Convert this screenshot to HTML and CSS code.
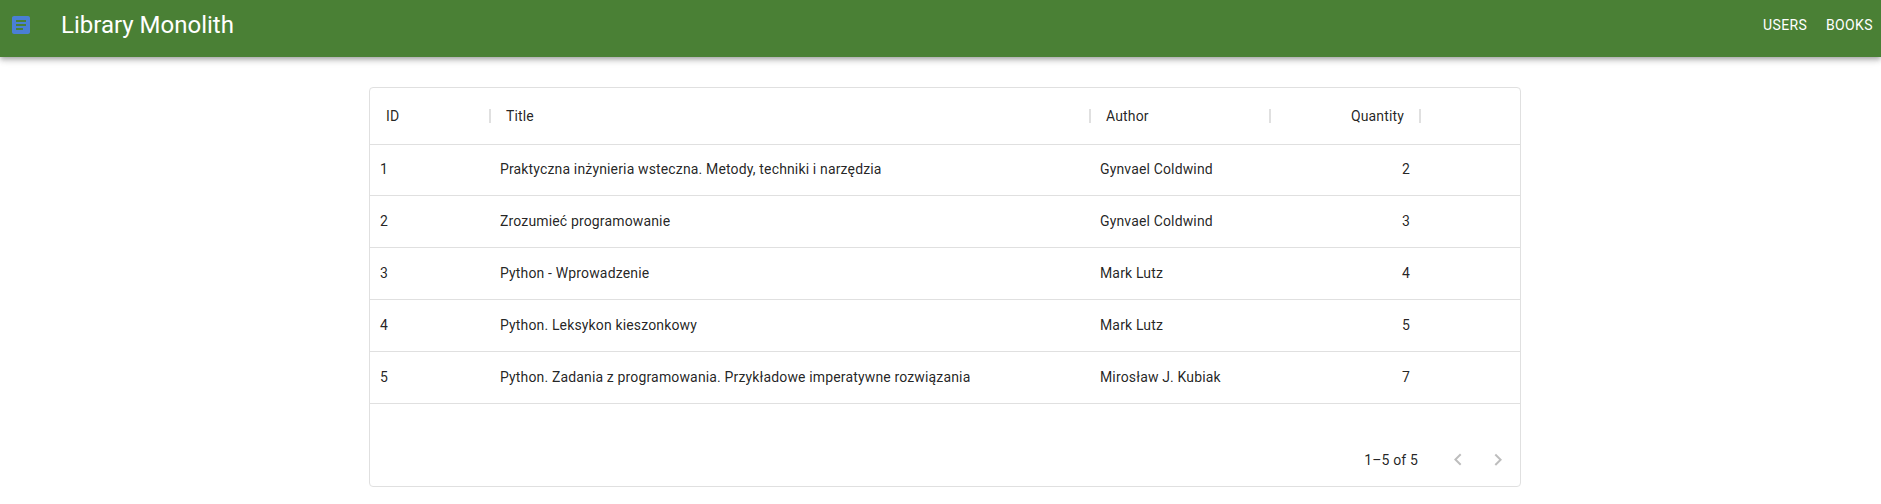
FILE: index.html
```html
<!DOCTYPE html>
<html lang="en">
<head>
<meta charset="utf-8">
<title>Library Monolith</title>
<link rel="stylesheet" href="styles.css">
</head>
<body>
<header class="app-bar">
  <svg class="logo" viewBox="0 0 24 24"><path d="M19 3H5c-1.1 0-2 .9-2 2v14c0 1.1.9 2 2 2h14c1.1 0 2-.9 2-2V5c0-1.1-.9-2-2-2zm-5 14H7v-2h7v2zm3-4H7v-2h10v2zm0-4H7V7h10v2z"/></svg>
  <h1 class="brand">Library Monolith</h1>
  <nav class="nav">
    <a class="nav-link">USERS</a>
    <a class="nav-link">BOOKS</a>
  </nav>
</header>
<main class="grid">
  <div class="grid-row grid-head">
    <div class="head-cell">ID</div>
    <div class="head-cell">Title</div>
    <div class="head-cell">Author</div>
    <div class="head-cell number">Quantity</div>
  </div>
  <div class="grid-row"><div class="cell">1</div><div class="cell">Praktyczna inżynieria wsteczna. Metody, techniki i narzędzia</div><div class="cell">Gynvael Coldwind</div><div class="cell number">2</div></div>
  <div class="grid-row"><div class="cell">2</div><div class="cell">Zrozumieć programowanie</div><div class="cell">Gynvael Coldwind</div><div class="cell number">3</div></div>
  <div class="grid-row"><div class="cell">3</div><div class="cell">Python - Wprowadzenie</div><div class="cell">Mark Lutz</div><div class="cell number">4</div></div>
  <div class="grid-row"><div class="cell">4</div><div class="cell">Python. Leksykon kieszonkowy</div><div class="cell">Mark Lutz</div><div class="cell number">5</div></div>
  <div class="grid-row"><div class="cell">5</div><div class="cell">Python. Zadania z programowania. Przykładowe imperatywne rozwiązania</div><div class="cell">Mirosław J. Kubiak</div><div class="cell number">7</div></div>
  <footer class="grid-footer">
    <span class="range">1–5 of 5</span>
    <span class="page-button"><svg class="arrow" viewBox="0 0 24 24"><path d="M15.41 16.09l-4.58-4.59 4.58-4.59L14 5.5l-6 6 6 6z"/></svg></span>
    <span class="page-button"><svg class="arrow" viewBox="0 0 24 24"><path d="M8.59 16.34l4.58-4.59-4.58-4.59L10 5.75l6 6-6 6z"/></svg></span>
  </footer>
</main>
</body>
</html>
```
FILE: styles.css
```css
* { box-sizing: border-box; }
body {
  margin: 0;
  background: #fff;
  color: rgba(0, 0, 0, 0.87);
  font: 400 14px/1.43 Roboto, "Liberation Sans", sans-serif;
  letter-spacing: 0.15px;
}
.app-bar {
  display: flex;
  align-items: center;
  height: 57px;
  padding: 0 8px 7px 9px;
  background: #4a8035;
  color: #fff;
  box-shadow: 0 2px 4px -1px rgba(0, 0, 0, 0.2), 0 4px 5px 0 rgba(0, 0, 0, 0.14), 0 1px 10px 0 rgba(0, 0, 0, 0.12);
}
.logo { width: 24px; height: 24px; fill: #4a7fd4; }
.brand {
  margin: 0 0 0 28px;
  font-size: 24px;
  font-weight: 400;
  line-height: 32px;
  letter-spacing: 0;
}
.nav { display: flex; gap: 18.6px; margin-left: auto; }
.nav-link { letter-spacing: 0.4px; }
.grid {
  display: flex;
  flex-direction: column;
  width: 1152px;
  height: 400px;
  margin: 30px auto 0 369px;
  border: 1px solid #e0e0e0;
  border-radius: 4px;
}
.grid-row {
  display: grid;
  grid-template-columns: 120px 600px 180px 150px;
  height: 52px;
  border-bottom: 1px solid #e0e0e0;
}
.grid-head { height: 57px; }
.grid-head + .grid-row { height: 51px; padding-bottom: 2px; }
.cell { padding: 0 10px; align-self: center; white-space: nowrap; }
.head-cell {
  display: flex;
  align-items: center;
  position: relative;
  padding: 0 16px;
  line-height: 56px;
}
.head-cell::after {
  content: "";
  position: absolute;
  top: 21px;
  right: -1px;
  width: 2px;
  height: 14px;
  background: #e0e0e0;
}
.number { justify-content: flex-end; text-align: right; }
.grid-footer {
  display: flex;
  align-items: center;
  justify-content: flex-end;
  height: 52px;
  margin-top: auto;
  padding-right: 2px;
}
.range { margin-right: 20px; }
.page-button { display: flex; padding: 8px; }
.arrow { width: 24px; height: 24px; fill: rgba(0, 0, 0, 0.26); }
```
